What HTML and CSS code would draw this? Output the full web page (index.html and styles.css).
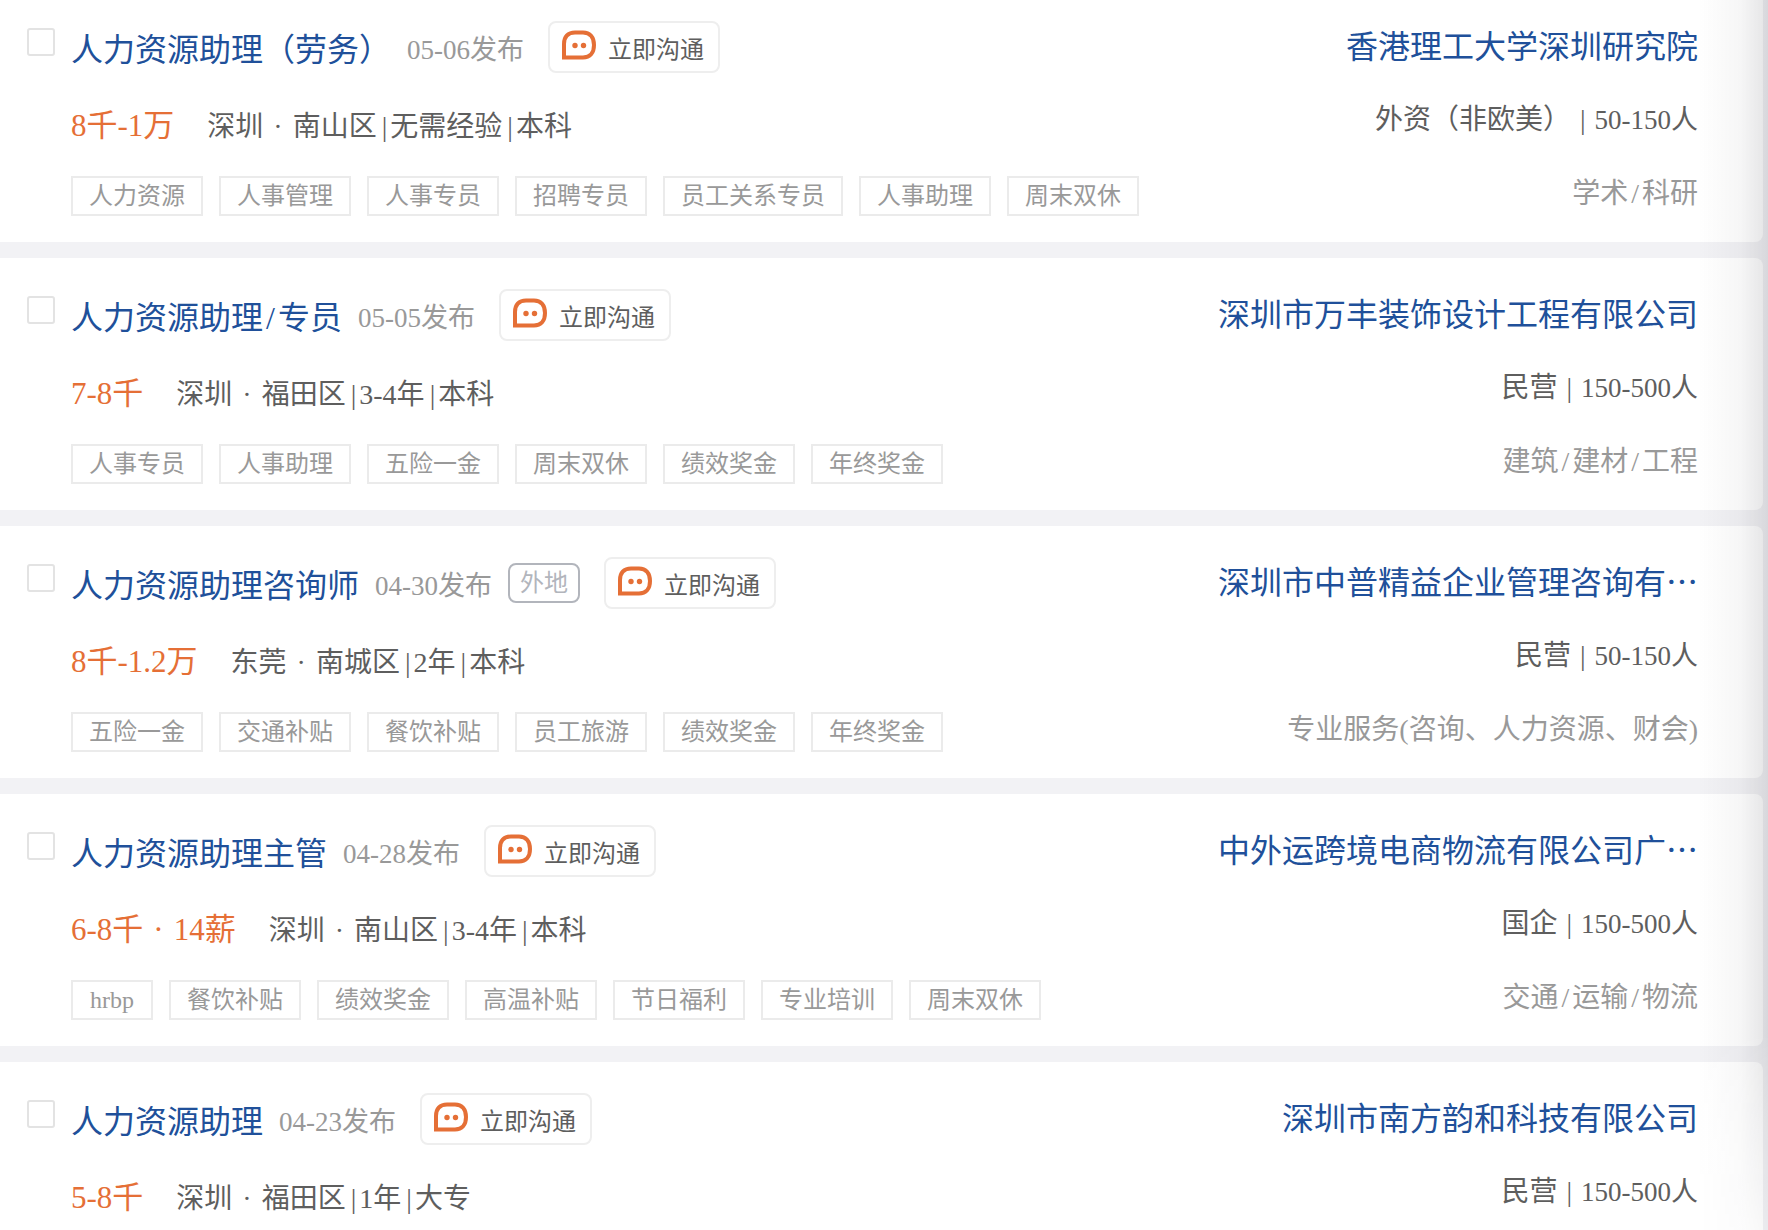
FILE: index.html
```
<!DOCTYPE html>
<html lang="zh-CN">
<head>
    <meta charset="utf-8">
    <title>人力资源助理</title>
    <link rel="stylesheet" href="styles.css">
</head>
<body>
    <!-- chat bubble, used by every chat button -->
    <svg class="sprite" aria-hidden="true">
        <symbol id="chat" viewBox="0 0 34 30">
            <path d="M2 27.5V14C2 6.500 6 2.500 13 2.500h8C28 2.500 32 7 32 15s-4 12.500-11 12.500z" fill="none" stroke="#e56f36" stroke-width="4"/>
            <circle cx="13" cy="15.500" r="2.700" fill="#e56f36"/>
            <circle cx="21.500" cy="15.500" r="2.700" fill="#e56f36"/>
        </symbol>
    </svg>

    <main class="job-list">
        <article class="job">
            <input type="checkbox" class="check" aria-label="人力资源助理（劳务）">
            <div class="info">
                <div class="head">
                    <a href="#" class="title">人力资源助理（劳务）</a>
                    <span class="date">05-06发布</span>
                    <button type="button" class="chat"><svg class="icon"><use href="#chat"/></svg>立即沟通</button>
                </div>
                <div class="meta">
                    <span class="salary">8千-1万</span>
                    <span>深圳<i class="dot">·</i>南山区<i class="bar">|</i>无需经验<i class="bar">|</i>本科</span>
                </div>
                <div class="tags">
                    <span>人力资源</span>
                    <span>人事管理</span>
                    <span>人事专员</span>
                    <span>招聘专员</span>
                    <span>员工关系专员</span>
                    <span>人事助理</span>
                    <span>周末双休</span>
                </div>
            </div>
            <div class="company">
                <a href="#" class="name">香港理工大学深圳研究院</a>
                <p>外资（非欧美） <i class="split">|</i> <span class="size">50-150人</span></p>
                <p class="trade">学术<i class="slash">/</i>科研</p>
            </div>
        </article>

        <article class="job">
            <input type="checkbox" class="check" aria-label="人力资源助理/专员">
            <div class="info">
                <div class="head">
                    <a href="#" class="title">人力资源助理<i class="slash">/</i>专员</a>
                    <span class="date">05-05发布</span>
                    <button type="button" class="chat"><svg class="icon"><use href="#chat"/></svg>立即沟通</button>
                </div>
                <div class="meta">
                    <span class="salary">7-8千</span>
                    <span>深圳<i class="dot">·</i>福田区<i class="bar">|</i>3-4年<i class="bar">|</i>本科</span>
                </div>
                <div class="tags">
                    <span>人事专员</span>
                    <span>人事助理</span>
                    <span>五险一金</span>
                    <span>周末双休</span>
                    <span>绩效奖金</span>
                    <span>年终奖金</span>
                </div>
            </div>
            <div class="company">
                <a href="#" class="name">深圳市万丰装饰设计工程有限公司</a>
                <p>民营 <i class="split">|</i> <span class="size">150-500人</span></p>
                <p class="trade">建筑<i class="slash">/</i>建材<i class="slash">/</i>工程</p>
            </div>
        </article>

        <article class="job">
            <input type="checkbox" class="check" aria-label="人力资源助理咨询师">
            <div class="info">
                <div class="head">
                    <a href="#" class="title">人力资源助理咨询师</a>
                    <span class="date">04-30发布</span>
                    <span class="remote">外地</span>
                    <button type="button" class="chat"><svg class="icon"><use href="#chat"/></svg>立即沟通</button>
                </div>
                <div class="meta">
                    <span class="salary">8千-1.2万</span>
                    <span>东莞<i class="dot">·</i>南城区<i class="bar">|</i>2年<i class="bar">|</i>本科</span>
                </div>
                <div class="tags">
                    <span>五险一金</span>
                    <span>交通补贴</span>
                    <span>餐饮补贴</span>
                    <span>员工旅游</span>
                    <span>绩效奖金</span>
                    <span>年终奖金</span>
                </div>
            </div>
            <div class="company">
                <a href="#" class="name">深圳市中普精益企业管理咨询有…</a>
                <p>民营 <i class="split">|</i> <span class="size">50-150人</span></p>
                <p class="trade">专业服务(咨询、人力资源、财会)</p>
            </div>
        </article>

        <article class="job">
            <input type="checkbox" class="check" aria-label="人力资源助理主管">
            <div class="info">
                <div class="head">
                    <a href="#" class="title">人力资源助理主管</a>
                    <span class="date">04-28发布</span>
                    <button type="button" class="chat"><svg class="icon"><use href="#chat"/></svg>立即沟通</button>
                </div>
                <div class="meta">
                    <span class="salary">6-8千<i class="dot">·</i>14薪</span>
                    <span>深圳<i class="dot">·</i>南山区<i class="bar">|</i>3-4年<i class="bar">|</i>本科</span>
                </div>
                <div class="tags">
                    <span>hrbp</span>
                    <span>餐饮补贴</span>
                    <span>绩效奖金</span>
                    <span>高温补贴</span>
                    <span>节日福利</span>
                    <span>专业培训</span>
                    <span>周末双休</span>
                </div>
            </div>
            <div class="company">
                <a href="#" class="name">中外运跨境电商物流有限公司广…</a>
                <p>国企 <i class="split">|</i> <span class="size">150-500人</span></p>
                <p class="trade">交通<i class="slash">/</i>运输<i class="slash">/</i>物流</p>
            </div>
        </article>

        <article class="job">
            <input type="checkbox" class="check" aria-label="人力资源助理">
            <div class="info">
                <div class="head">
                    <a href="#" class="title">人力资源助理</a>
                    <span class="date">04-23发布</span>
                    <button type="button" class="chat"><svg class="icon"><use href="#chat"/></svg>立即沟通</button>
                </div>
                <div class="meta">
                    <span class="salary">5-8千</span>
                    <span>深圳<i class="dot">·</i>福田区<i class="bar">|</i>1年<i class="bar">|</i>大专</span>
                </div>
            </div>
            <div class="company">
                <a href="#" class="name">深圳市南方韵和科技有限公司</a>
                <p>民营 <i class="split">|</i> <span class="size">150-500人</span></p>
            </div>
        </article>
    </main>
    <div class="edge-shade"></div>
</body>
</html>
```
FILE: styles.css
```
* {
    box-sizing: border-box;
}

body {
    margin: 0;
    height: 100vh;
    overflow: hidden;
    background: #f2f2f5;
    color: #5e5e5e;
    font-family: "Liberation Serif", "Noto Sans CJK SC", serif;
    font-size: 28px;
}

a {
    color: #20509a;
    text-decoration: none;
}

i {
    font-style: normal;
}

.sprite {
    display: none;
}

/* the list is scrolled a little past the first card's top */
.job-list {
    display: flex;
    flex-direction: column;
    gap: 16px;
    margin-top: -10px;
    padding-right: 5px;
}

.job {
    display: flex;
    align-items: flex-start;
    min-height: 252px;
    padding: 0 65px 0 27px;
    background: #fff;
    border-radius: 0 8px 8px 0;
}

.check {
    appearance: none;
    flex: none;
    width: 28px;
    height: 28px;
    margin: 38px 16px 0 0;
    border: 2px solid #e3e3e3;
    border-radius: 3px;
    background: #fff;
}

.info {
    flex: 1;
    padding-top: 31px;
}

.head {
    display: flex;
    align-items: center;
    gap: 16px;
    height: 52px;
}

.title {
    font-size: 32px;
}

.date {
    color: #999;
    font-size: 27px;
}

.remote {
    padding: 0 10px;
    border: 2px solid #b2b5bc;
    border-radius: 8px;
    color: #b2b5bc;
    font-size: 24px;
    line-height: 36px;
}

.chat {
    display: flex;
    align-items: center;
    gap: 12px;
    height: 52px;
    margin-left: 8px;
    padding: 0 14px 0 12px;
    border: 2px solid #eee;
    border-radius: 8px;
    background: #fff;
    color: #5e5e5e;
    font-family: inherit;
    font-size: 24px;
}

.icon {
    width: 34px;
    height: 30px;
    margin-bottom: 4px;
}

.meta {
    display: flex;
    align-items: baseline;
    gap: 33px;
    margin-top: 33px;
    line-height: 40px;
}

.salary {
    color: #e56f36;
    font-size: 31px;
}

.dot {
    padding: 0 10px;
}

.bar {
    padding: 0 3px 0 5px;
}

.slash {
    padding: 0 3px;
}

.split {
    padding: 0 2px;
}

.tags {
    display: flex;
    flex-wrap: wrap;
    gap: 16px;
    margin-top: 29px;
}

.tags span {
    min-width: 82px;
    padding: 0 16px;
    border: 2px solid #ebebeb;
    color: #999;
    font-size: 24px;
    line-height: 36px;
    text-align: center;
}

.company {
    padding-top: 20px;
    text-align: right;
    line-height: 73px;
}

.company p {
    margin: 0;
}

.name {
    display: block;
    margin-bottom: 4px;
    font-family: "Noto Sans CJK SC", sans-serif;
    font-size: 32px;
    line-height: 69px;
}

.size {
    font-size: 27px;
}

.company .trade {
    color: #999;
}

/* soft shadow along the right edge of the window, fading out at the bottom */
.edge-shade {
    position: fixed;
    top: 0;
    right: 0;
    bottom: 0;
    width: 70px;
    background: linear-gradient(to right, rgba(30, 30, 40, 0), rgba(30, 30, 40, 0.04) 60%, rgba(30, 30, 40, 0.12));
    mask-image: linear-gradient(to bottom, #000 84%, rgba(0, 0, 0, 0.3));
    pointer-events: none;
}
```
